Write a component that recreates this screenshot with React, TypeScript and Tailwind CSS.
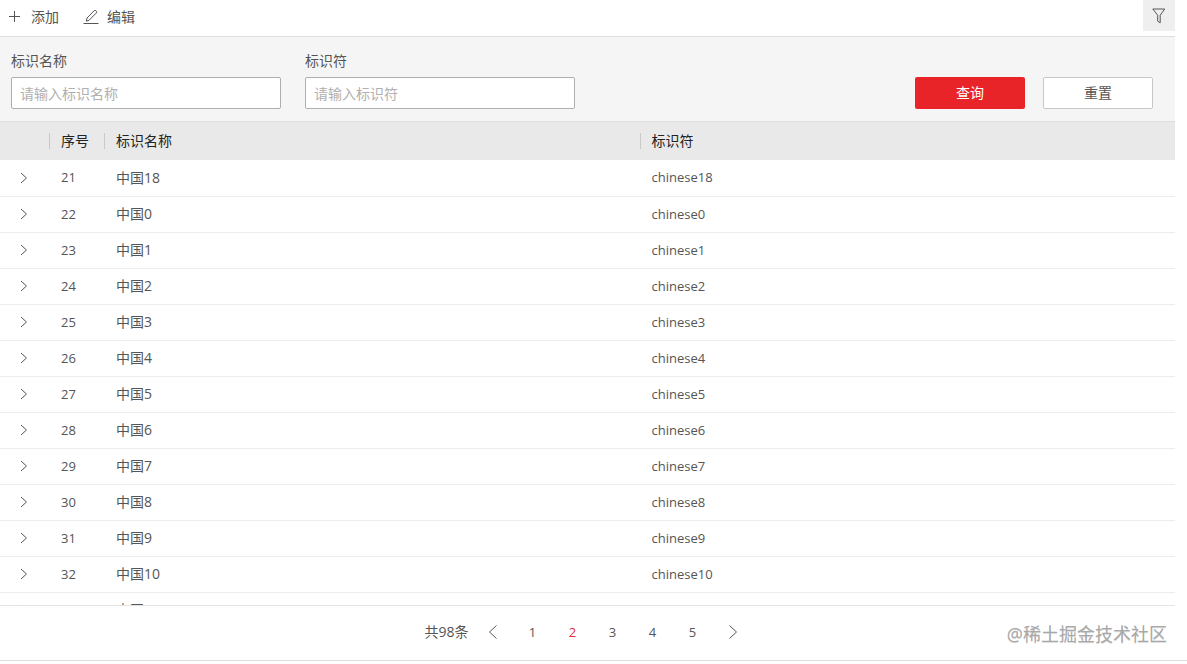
import { useState } from 'react';

const rows = [
  { no: 21, name: '中国18', code: 'chinese18' },
  { no: 22, name: '中国0', code: 'chinese0' },
  { no: 23, name: '中国1', code: 'chinese1' },
  { no: 24, name: '中国2', code: 'chinese2' },
  { no: 25, name: '中国3', code: 'chinese3' },
  { no: 26, name: '中国4', code: 'chinese4' },
  { no: 27, name: '中国5', code: 'chinese5' },
  { no: 28, name: '中国6', code: 'chinese6' },
  { no: 29, name: '中国7', code: 'chinese7' },
  { no: 30, name: '中国8', code: 'chinese8' },
  { no: 31, name: '中国9', code: 'chinese9' },
  { no: 32, name: '中国10', code: 'chinese10' },
  { no: 33, name: '中国11', code: 'chinese11' },
];

const pages = [1, 2, 3, 4, 5];

function SearchField({ id, label, value, onChange }: {
  id: string;
  label: string;
  value: string;
  onChange: (value: string) => void;
}) {
  return (
    <div className="flex w-[270px] flex-col gap-1.5">
      <label htmlFor={id} className="leading-5">{label}</label>
      <input
        id={id}
        type="text"
        value={value}
        onChange={e => onChange(e.target.value)}
        placeholder={`请输入${label}`}
        className="h-8 rounded-xs border border-[#aeaeae] bg-white px-2 outline-none placeholder:text-[#b0b0b0] focus:border-[#e82428]"
      />
    </div>
  );
}

export default function App() {
  const [name, setName] = useState('');
  const [code, setCode] = useState('');
  const [page, setPage] = useState(2);
  const [showFilter, setShowFilter] = useState(true);

  const reset = () => {
    setName('');
    setCode('');
  };

  return (
    <div className="h-screen bg-white pb-[3px] font-['Open_Sans','Noto_Sans_CJK_SC',sans-serif] text-sm text-[#555555]">
      <div className="relative flex h-full flex-col border-b border-[#dedede] pr-3">

        {/* Toolbar */}
        <div className="flex h-[37px] shrink-0 items-start justify-between border-b border-[#dedede] pl-2">
          <div className="flex h-[34px] items-center gap-6">
            <button type="button" className="flex items-center gap-[9px]">
              <svg width="14" height="14" viewBox="0 0 14 14" fill="none" stroke="currentColor">
                <path d="M6.5 1v11M1 6.5h11" />
              </svg>
              添加
            </button>
            <button type="button" className="flex items-center gap-2">
              <svg width="16" height="16" viewBox="0 0 16 16" fill="none" stroke="currentColor">
                <path d="M0.5 14.5h15" />
                <path d="M3.3 12.2l0.7-3.2 7.2-7.3q0.8-0.7 1.6 0l0.6 0.6q0.7 0.8 0 1.6l-7.2 7.3z" strokeLinejoin="round" />
              </svg>
              编辑
            </button>
          </div>
          <button
            type="button"
            aria-label="筛选"
            onClick={() => setShowFilter(!showFilter)}
            className="flex h-[31px] w-8 items-center justify-center bg-[#efefef]"
          >
            <svg width="14" height="16" viewBox="0 0 14 16" fill="none" stroke="currentColor" strokeLinejoin="round">
              <path d="M0.8 1h11.9l-4.5 6.2v7.6l-2.5-1.6V7.2z" />
            </svg>
          </button>
        </div>

        {/* Search form */}
        {showFilter && (
          <form
            onSubmit={e => e.preventDefault()}
            className="flex shrink-0 items-end justify-between border-b border-[#dedede] bg-[#f5f5f5] pt-3.5 pr-[22px] pb-3 pl-[11px]"
          >
            <div className="flex gap-6">
              <SearchField id="name" label="标识名称" value={name} onChange={setName} />
              <SearchField id="code" label="标识符" value={code} onChange={setCode} />
            </div>
            <div className="flex gap-[18px]">
              <button type="submit" className="h-8 w-[110px] rounded-xs bg-[#e82428] text-white">查询</button>
              <button type="button" onClick={reset} className="h-8 w-[110px] rounded-xs border border-[#c8c8c8] bg-white">重置</button>
            </div>
          </form>
        )}

        {/* Table, only the body scrolls */}
        <div className="min-h-0 flex-1 overflow-y-auto [scrollbar-width:none]">
          <table className="w-full table-fixed border-separate border-spacing-0 text-left">
            <thead className="sticky top-0 text-[#222222]">
              <tr className="h-[38px]">
                <th aria-label="展开" className="w-[49px] bg-[#e9e9e9] p-0" />
                <th className="w-[55px] bg-[#e9e9e9] p-0 font-normal">
                  <div className="border-l border-[#c9c9c9] pl-[11px] leading-4">序号</div>
                </th>
                <th className="bg-[#e9e9e9] p-0 font-normal">
                  <div className="border-l border-[#c9c9c9] pl-[11px] leading-4">标识名称</div>
                </th>
                <th className="bg-[#e9e9e9] p-0 font-normal">
                  <div className="border-l border-[#c9c9c9] pl-[11px] leading-4">标识符</div>
                </th>
              </tr>
            </thead>
            <tbody className="[&>tr+tr>td]:border-t [&>tr+tr>td]:border-[#ececec]">
              {rows.map(row => (
                <tr key={row.no} className="h-9">
                  <td className="p-0 pr-0.5 pb-px">
                    <button type="button" aria-label="展开" className="flex w-full justify-center">
                      <svg width="8" height="12" viewBox="0 0 8 12" fill="none" stroke="currentColor">
                        <path d="M1 1l5.5 5-5.5 5" />
                      </svg>
                    </button>
                  </td>
                  <td className="p-0 pb-px pl-3 text-[13px]">{row.no}</td>
                  <td className="p-0 pb-px pl-3">{row.name}</td>
                  <td className="p-0 pb-px pl-3 text-[13px]">{row.code}</td>
                </tr>
              ))}
            </tbody>
          </table>
        </div>

        {/* Pagination */}
        <div className="flex h-[55px] shrink-0 items-center justify-center gap-1 border-t border-[#e4e4e4] pb-0.5 pl-0.5">
          <span>共98条</span>
          <nav className="flex text-[13px]">
            <button type="button" aria-label="上一页" onClick={() => setPage(Math.max(1, page - 1))} className="flex h-8 w-10 items-center justify-center">
              <svg width="10" height="14" viewBox="0 0 10 14" fill="none" stroke="currentColor">
                <path d="M8.5 0.5L1.5 7l7 6.5" />
              </svg>
            </button>
            {pages.map(p => (
              <button
                key={p}
                type="button"
                onClick={() => setPage(p)}
                className={`h-8 w-10 ${p === page ? 'text-[#e0313a]' : ''}`}
              >
                {p}
              </button>
            ))}
            <button type="button" aria-label="下一页" onClick={() => setPage(Math.min(5, page + 1))} className="flex h-8 w-10 items-center justify-center">
              <svg width="10" height="14" viewBox="0 0 10 14" fill="none" stroke="currentColor">
                <path d="M1.5 0.5l7 6.5-7 6.5" />
              </svg>
            </button>
          </nav>
        </div>

        <span className="absolute right-5 bottom-3 text-lg text-[#a8a8a8] text-shadow-2xs">@稀土掘金技术社区</span>
      </div>
    </div>
  );
}
